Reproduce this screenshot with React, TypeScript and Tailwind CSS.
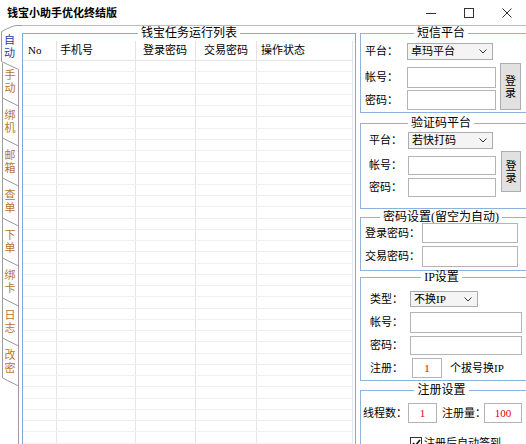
import React from "react";

const FONT = "font-['Liberation_Serif','Noto_Sans_CJK_SC',serif]";

function Chevron() {
  return (
    <svg width="8" height="5" viewBox="0 0 8 5" className="shrink-0">
      <path d="M0.5 0.5 L4 4 L7.5 0.5" fill="none" stroke="#333" strokeWidth="1" />
    </svg>
  );
}

function Group({ title, className, children }: { title: string; className: string; children?: React.ReactNode }) {
  return (
    <fieldset className={`shrink-0 border border-[#8db3da] pr-[8px] ${className}`}>
      <legend className="mx-auto whitespace-nowrap px-[3px] text-[12px] leading-[12px] text-black">{title}</legend>
      {children}
    </fieldset>
  );
}

function Label({ w, children }: { w: string; children: React.ReactNode }) {
  return <span className={`shrink-0 whitespace-nowrap ${w}`}>{children}</span>;
}

const cols = [
  { label: "No", w: "w-[34px]", pl: "pl-[5px]" },
  { label: "手机号", w: "w-[79px]", pl: "pl-[3px]" },
  { label: "登录密码", w: "w-[60px]", pl: "pl-[7px]" },
  { label: "交易密码", w: "w-[61px]", pl: "pl-[8px]" },
  { label: "操作状态", w: "w-[96px]", pl: "pl-[4px]" },
];

const tabs = ["自动", "手动", "绑机", "邮箱", "查单", "下单", "绑卡", "日志", "改密"];

export default function App() {
  const rows = Array.from({ length: 36 });
  const boundaries = [77, 117, 157, 197, 237, 277, 317, 357];
  return (
    <div className={`relative h-[444px] w-[526px] overflow-hidden bg-white text-black ${FONT}`}>
      {/* title bar */}
      <div className="flex h-[25px] items-center justify-between">
        <div className="pl-[7px] text-[11px] font-bold leading-[12px]">钱宝小助手优化终结版</div>
        <div className="flex h-full">
          <div className="flex w-[37px] items-center justify-center">
            <svg width="10" height="10" viewBox="0 0 10 10">
              <path d="M0 5.5 H10" stroke="#333" strokeWidth="1" />
            </svg>
          </div>
          <div className="flex w-[39px] items-center justify-center">
            <svg width="10" height="10" viewBox="0 0 10 10">
              <rect x="0.5" y="0.5" width="9" height="9" fill="none" stroke="#333" strokeWidth="1" />
            </svg>
          </div>
          <div className="flex w-[38px] items-center justify-center">
            <svg width="10" height="10" viewBox="0 0 10 10">
              <path d="M0.5 0.5 L9.5 9.5 M9.5 0.5 L0.5 9.5" stroke="#333" strokeWidth="1" />
            </svg>
          </div>
        </div>
      </div>

      <div className="flex h-[419px]">
        {/* tab strip */}
        <div className="relative w-[18px] shrink-0">
          <svg className="absolute left-0 top-0 overflow-visible" width="24" height="419" viewBox="0 0 24 419">
            <path d="M22 0.5 L16 0.5 Q12 1 1.5 6.5 L1.5 36.5 L18.5 44.5 L18.5 419" fill="none" stroke="#9c9c9c" strokeWidth="1" />
            <path d="M2.5 38 L2.5 353" fill="none" stroke="#9c9c9c" strokeWidth="1" />
            {boundaries.map((b) => (
              <path key={b} d={`M2.5 ${b - 4} L18.5 ${b + 4}`} fill="none" stroke="#9c9c9c" strokeWidth="1" />
            ))}
          </svg>
          <div className="relative flex flex-col">
            {tabs.map((t, i) => (
              <div
                key={t}
                className={
                  i === 0
                    ? "flex h-[37px] flex-col items-center justify-center pl-[1px] pt-[7px] text-[11px] leading-[13px] text-[#2b3ea6]"
                    : "flex h-[40px] flex-col items-center justify-center pl-[2px] text-[11px] leading-[13px] text-[#b9742c]"
                }
              >
                <span>{t[0]}</span>
                <span>{t[1]}</span>
              </div>
            ))}
          </div>
        </div>

        {/* tab page */}
        <div className="flex flex-1 items-start border-t border-[#bdbdbd]">
          {/* list group */}
          <fieldset className="ml-[4px] mt-[1px] h-[420px] w-[334px] shrink-0 border border-[#7fa9d4]">
            <legend className="mx-auto px-[3px] text-[12px] leading-[12px]">钱宝任务运行列表</legend>
            <div className="mt-[2px] w-[330px]">
              <div className="flex h-[20px] border-b border-[#e6e6e6]">
                {cols.map((c) => (
                  <div
                    key={c.label}
                    className={`flex h-full shrink-0 items-center border-r border-[#e3e3e3] text-[11px] ${c.w} ${c.pl}`}
                  >
                    {c.label}
                  </div>
                ))}
              </div>
              {rows.map((_, r) => (
                <div key={r} className="flex h-[11.25px] border-b border-[#efefef]">
                  {cols.map((c) => (
                    <div key={c.label} className={`h-full shrink-0 border-r border-[#e6e6e6] ${c.w}`} />
                  ))}
                </div>
              ))}
            </div>
          </fieldset>

          {/* right panel */}
          <div className="ml-[4px] flex w-[170px] shrink-0 flex-col text-[11px]">
            <Group title="短信平台" className="mt-[1px] h-[86px] w-[170px]">
              <div className="mt-[4px] flex h-[17px] items-center pl-[4px]">
                <Label w="w-[42px]">平台：</Label>
                <div className="flex h-[17px] w-[86px] items-center justify-between border border-[#acacac] bg-[#f4f4f4] pl-[3px] pr-[5px]">
                  <span>卓玛平台</span>
                  <Chevron />
                </div>
              </div>
              <div className="mt-[3px] flex items-start">
                <div className="flex flex-col pl-[4px]">
                  <div className="mt-[4px] flex h-[21px] items-center">
                    <Label w="w-[42px]">帐号：</Label>
                    <div className="h-[21px] w-[89px] border border-[#b4b4b4] bg-white" />
                  </div>
                  <div className="mt-[2px] flex h-[20px] items-center">
                    <Label w="w-[42px]">密码：</Label>
                    <div className="h-[20px] w-[89px] border border-[#b4b4b4] bg-white" />
                  </div>
                </div>
                <div className="ml-[4px] flex h-[47px] w-[21px] flex-col items-center justify-center border border-[#adadad] bg-[#e1e1e1] leading-[12px]">
                  <span>登</span>
                  <span>录</span>
                </div>
              </div>
            </Group>

            <Group title="验证码平台" className="mt-[4px] h-[92px] w-[170px]">
              <div className="mt-[3px] flex h-[17px] items-center pl-[8px]">
                <Label w="w-[39px]">平台：</Label>
                <div className="flex h-[17px] w-[85px] items-center justify-between border border-[#acacac] bg-[#f4f4f4] pl-[3px] pr-[5px]">
                  <span>若快打码</span>
                  <Chevron />
                </div>
              </div>
              <div className="mt-[2px] flex items-start">
                <div className="flex flex-col pl-[8px]">
                  <div className="mt-[5px] flex h-[19px] items-center">
                    <Label w="w-[39px]">帐号：</Label>
                    <div className="h-[19px] w-[88px] border border-[#b4b4b4] bg-white" />
                  </div>
                  <div className="mt-[3px] flex h-[19px] items-center">
                    <Label w="w-[39px]">密码：</Label>
                    <div className="h-[19px] w-[88px] border border-[#b4b4b4] bg-white" />
                  </div>
                </div>
                <div className="ml-[5px] flex h-[41px] w-[20px] flex-col items-center justify-center border border-[#adadad] bg-[#e1e1e1] leading-[12px]">
                  <span>登</span>
                  <span>录</span>
                </div>
              </div>
            </Group>

            <Group title="密码设置(留空为自动)" className="mt-[2px] h-[60px] w-[170px]">
              <div className="flex h-[20px] items-center pl-[4px]">
                <Label w="w-[57px]">登录密码：</Label>
                <div className="h-[20px] w-[96px] border border-[#b4b4b4] bg-white" />
              </div>
              <div className="mt-[3px] flex h-[21px] items-center pl-[4px]">
                <Label w="w-[57px]">交易密码：</Label>
                <div className="h-[21px] w-[96px] border border-[#b4b4b4] bg-white" />
              </div>
            </Group>

            <Group title="IP设置" className="h-[110px] w-[170px]">
              <div className="mt-[8px] flex h-[16px] items-center pl-[9px]">
                <Label w="w-[40px]">类型：</Label>
                <div className="flex h-[16px] w-[68px] items-center justify-between border border-[#acacac] bg-[#f4f4f4] pl-[3px] pr-[5px]">
                  <span>不换IP</span>
                  <Chevron />
                </div>
              </div>
              <div className="mt-[5px] flex h-[21px] items-center pl-[9px]">
                <Label w="w-[40px]">帐号：</Label>
                <div className="h-[21px] w-[112px] border border-[#b4b4b4] bg-white" />
              </div>
              <div className="mt-[3px] flex h-[19px] items-center pl-[9px]">
                <Label w="w-[40px]">密码：</Label>
                <div className="h-[19px] w-[112px] border border-[#b4b4b4] bg-white" />
              </div>
              <div className="mt-[3px] flex h-[20px] items-center pl-[9px]">
                <Label w="w-[42px]">注册：</Label>
                <div className="flex h-[20px] w-[30px] items-center justify-center border border-[#b4b4b4] bg-white text-[#e00000]">
                  1
                </div>
                <span className="ml-[8px] whitespace-nowrap">个拔号换IP</span>
              </div>
            </Group>

            <Group title="注册设置" className="mt-[3px] h-[80px] w-[170px]">
              <div className="mt-[7px] flex h-[20px] items-center pl-[2px]">
                <Label w="w-[45px]">线程数：</Label>
                <div className="flex h-[20px] w-[29px] shrink-0 items-center justify-center border border-[#b4b4b4] bg-white text-[#e00000]">
                  1
                </div>
                <span className="ml-[5px] w-[42px] shrink-0 whitespace-nowrap">注册量：</span>
                <div className="flex h-[20px] w-[38px] shrink-0 items-center justify-center border border-[#b4b4b4] bg-white text-[#e00000]">
                  100
                </div>
              </div>
              <div className="mt-[12px] flex items-center pl-[49px]">
                <div className="flex h-[12px] w-[12px] items-center justify-center border border-[#333] bg-white">
                  <svg width="9" height="8" viewBox="0 0 9 8">
                    <path d="M1 4 L3.5 6.5 L8 1" fill="none" stroke="#111" strokeWidth="1.6" />
                  </svg>
                </div>
                <span className="ml-[2px] whitespace-nowrap">注册后自动签到</span>
              </div>
            </Group>
          </div>
        </div>
      </div>
    </div>
  );
}
